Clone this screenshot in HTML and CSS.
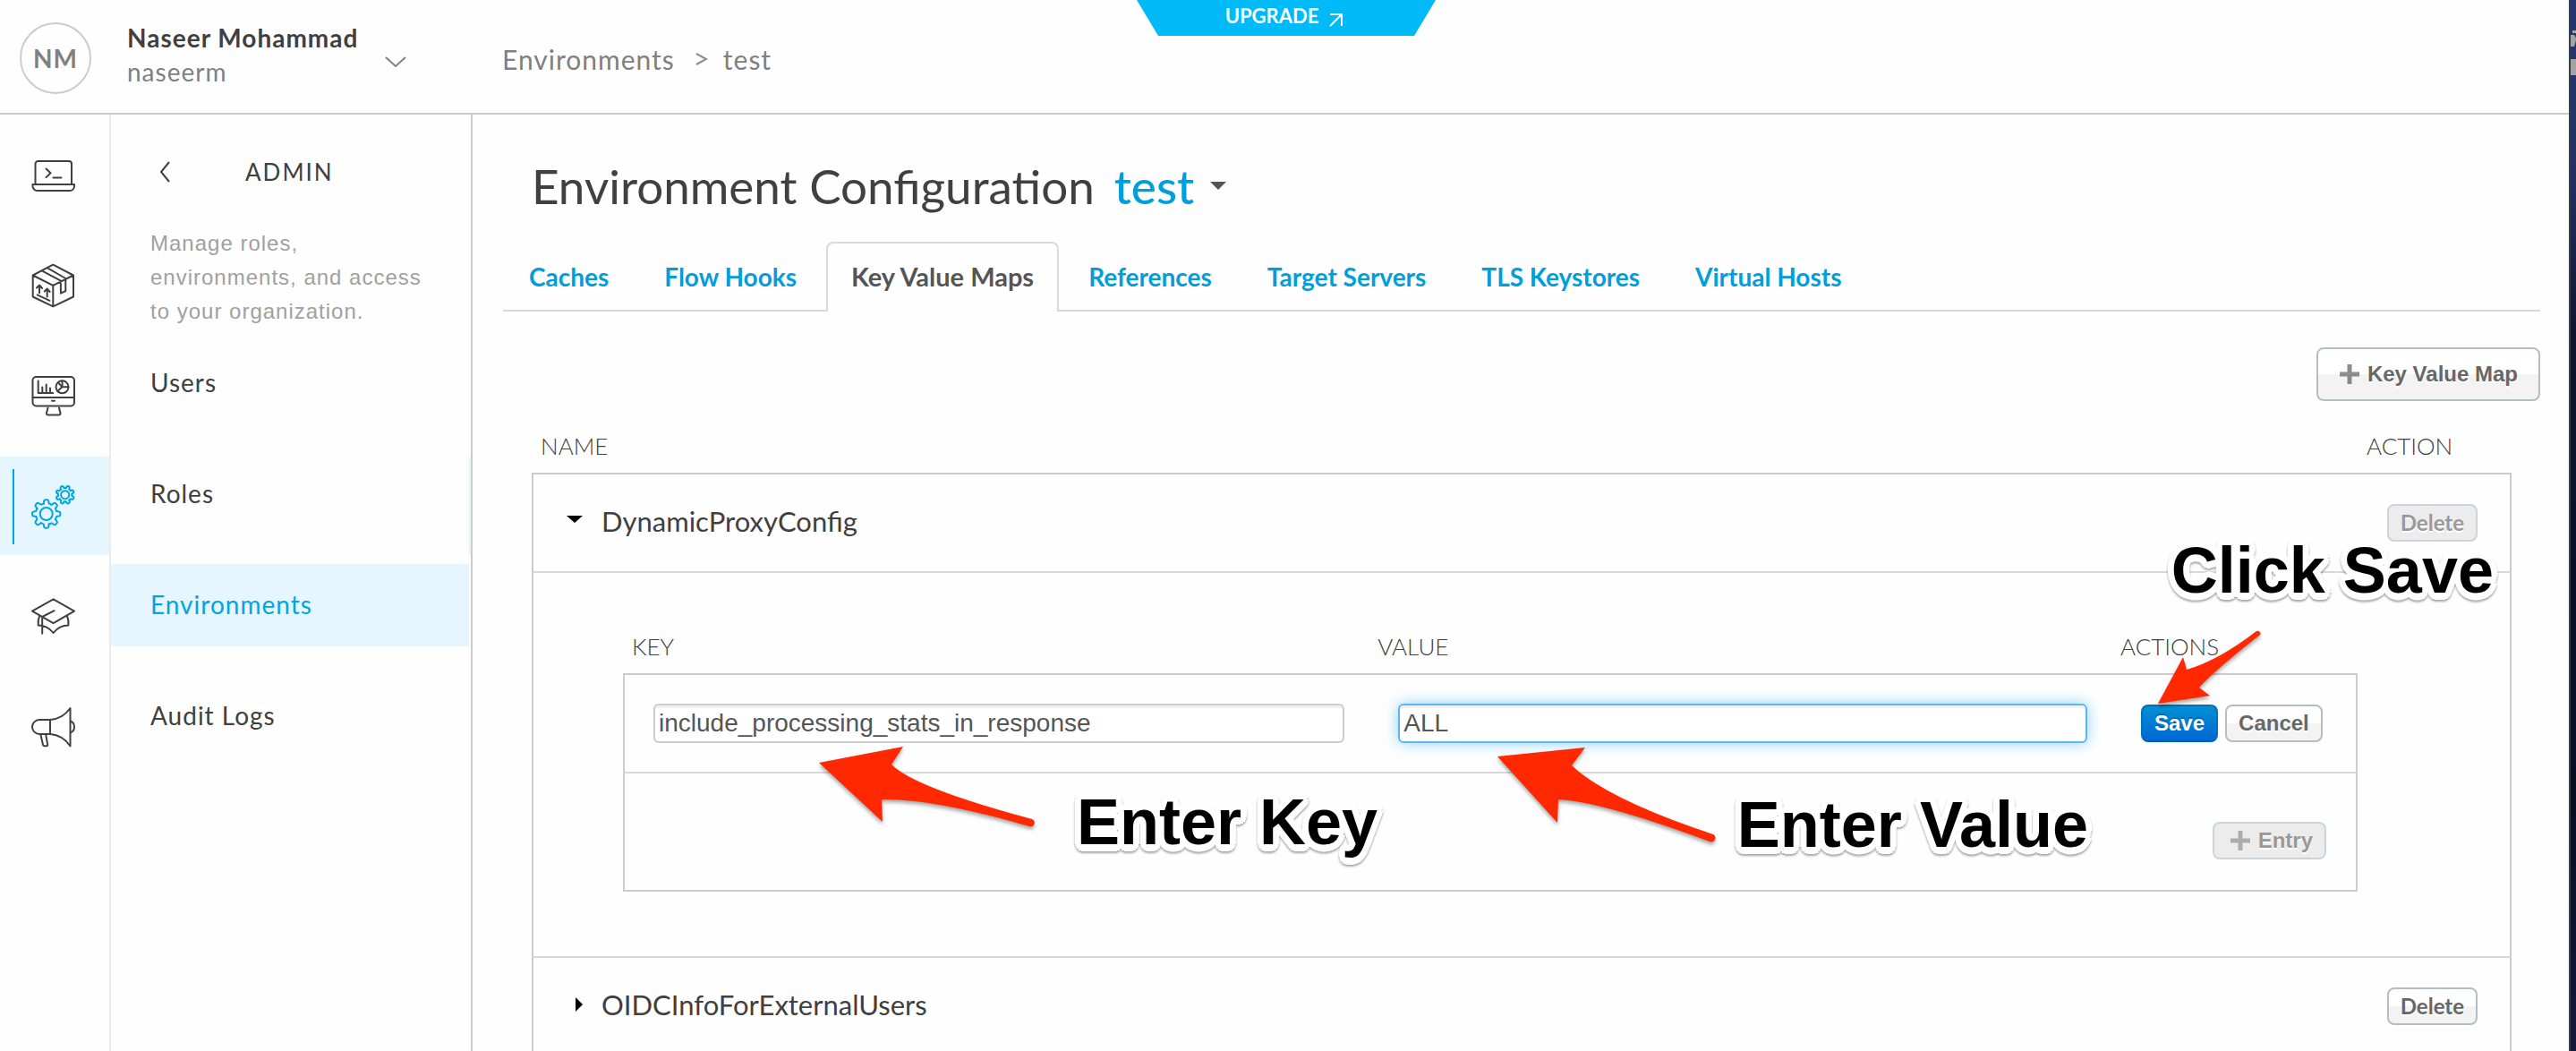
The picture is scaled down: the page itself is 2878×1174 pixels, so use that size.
FILE: index.html
```html
<!DOCTYPE html>
<html lang="en">
<head>
<meta charset="utf-8">
<meta name="viewport" content="width=device-width, initial-scale=1">
<title>Environment Configuration</title>
<link rel="stylesheet" href="styles.css">
</head>
<body>
<div class="window">
  <div class="app">
    <header class="topbar">
      <button class="account" type="button">
        <span class="avatar">NM</span>
        <span class="account-text">
          <strong class="account-name">Naseer Mohammad</strong>
          <span class="account-org">naseerm</span>
        </span>
        <svg class="account-chevron" viewBox="0 0 24 14" fill="none" stroke="#808080" stroke-width="2" aria-hidden="true"><path d="M1 2l11 10L23 2"/></svg>
      </button>
      <nav class="crumbs" aria-label="Breadcrumb">
        <a href="#environments">Environments</a>
        <svg viewBox="0 0 14 14" fill="none" stroke="#8c8c8c" stroke-width="2" aria-hidden="true"><path d="M1 1l11 6-11 6"/></svg>
        <a href="#test">test</a>
      </nav>
      <a class="upgrade" href="#upgrade">UPGRADE
        <svg viewBox="0 0 16 16" fill="none" stroke="#fff" stroke-width="2" aria-hidden="true"><path d="M1 15L14 2M1 2h13v13"/></svg>
      </a>
    </header>

    <div class="body">
      <nav class="rail" aria-label="Sections">
        <a class="rail-item" href="#develop" aria-label="Develop">
          <svg class="icon" viewBox="0 0 50 50" aria-hidden="true"><path d="M4.500 35V12a3 3 0 0 1 3-3H42a3 3 0 0 1 3 3v23M1.500 35H48v2a5 5 0 0 1-5 5H6.500a5 5 0 0 1-5-5zM16.500 17.500l5 4.800-5 4.800M24.500 27.500h9"/></svg>
        </a>
        <a class="rail-item" href="#publish" aria-label="Publish">
          <svg class="icon" viewBox="0 0 50 50" aria-hidden="true"><path d="M24.300 1.700L47 13.500v24L24.300 48.300 1.700 37.500v-24zM1.700 13.500l22.600 11.300L47 13.500M24.300 24.800v23.500M17.700 5.200L38.300 17v14l-5.400 2.600V19.700L11.700 8.300M9 33.300v-8.500M6 27.500l3-3 3 3.500M17.700 37.600v-8.800M14.700 31.500l3-3 3 3.500M6.700 35.300l13.800 6.500"/></svg>
        </a>
        <a class="rail-item" href="#analyze" aria-label="Analyze">
          <svg class="icon" viewBox="0 0 50 50" aria-hidden="true"><rect x="1.500" y="4" width="46.500" height="32.500" rx="4"/><path d="M1.500 27H48M23 30.700h3M18.500 38.500l-1.500 6q-.2 2 2 2h11.500q2.200 0 2-2l-1.500-6M7.700 8.500V22h16.500M12.300 21.500v-6M16.700 21.500v-9M21 21.500v-5"/><circle cx="34.500" cy="15.300" r="7"/><path d="M34.500 8.500v6.800h7M34.500 15.300l-5.300 4.800M34.500 15.300l-4.500-5"/></svg>
        </a>
        <a class="rail-item rail-item-active" href="#admin" aria-label="Admin">
          <svg class="icon" viewBox="0 0 50 50" aria-hidden="true">
            <defs>
              <path id="tooth" vector-effect="non-scaling-stroke" d="M-3-11.400L-2.600-14q.2-1.700 1.600-1.700h2q1.400 0 1.600 1.700l.4 2.600q1.600.2 2.900 1.300"/>
              <g id="gear"><use href="#tooth"/><use href="#tooth" transform="rotate(45)"/><use href="#tooth" transform="rotate(90)"/><use href="#tooth" transform="rotate(135)"/><use href="#tooth" transform="rotate(180)"/><use href="#tooth" transform="rotate(225)"/><use href="#tooth" transform="rotate(270)"/><use href="#tooth" transform="rotate(315)"/><circle r="7" vector-effect="non-scaling-stroke"/></g>
            </defs>
            <use href="#gear" transform="translate(16.700 34)"/>
            <use href="#gear" transform="translate(37.700 12.700) rotate(22) scale(.65)"/>
          </svg>
        </a>
        <a class="rail-item" href="#learn" aria-label="Learn">
          <svg class="icon" viewBox="0 0 50 50" aria-hidden="true"><path d="M24.600 6.300L48 19.700 24.600 33.200 1 19.700zM25.600 19.200L12.200 26v18.700M9 25.500q-1.800 4-1.300 10Q18 35.500 24.600 44q6.600-8.500 16.800-8.500.5-6-1.300-10"/></svg>
        </a>
        <a class="rail-item" href="#news" aria-label="News">
          <svg class="icon" viewBox="0 0 50 50" aria-hidden="true"><path d="M21 18H9a8 8 0 0 0 0 16h12zM21 18Q35 17 43.500 5v42.500Q35 35 21 34M43.500 19.500q4.500 1.500 4.500 6.500t-4.500 6.500M10.500 35l2.500 11q.3 1.300 1.600 1.300h2.400q1.400 0 1.200-1.500L16.300 35"/></svg>
        </a>
      </nav>

      <aside class="panel">
        <div class="panel-head">
          <button class="back" type="button" aria-label="Back"><svg viewBox="0 0 12 24" fill="none" stroke="#404040" stroke-width="2" aria-hidden="true"><path d="M11 1L2 12l9 11"/></svg></button>
          <h2 class="panel-title">ADMIN</h2>
        </div>
        <p class="panel-text">Manage roles, environments, and access to your organization.</p>
        <nav class="menu" aria-label="Admin">
          <a href="#users">Users</a>
          <a href="#roles">Roles</a>
          <a class="menu-active" href="#environments">Environments</a>
          <a href="#audit">Audit Logs</a>
        </nav>
      </aside>

      <main class="content">
        <h1 class="title">Environment Configuration
          <button class="env-picker" type="button">test<svg viewBox="0 0 18 10" aria-hidden="true"><path fill="#555" d="M0 0h18L9 9z"/></svg></button>
        </h1>

        <nav class="tabs" aria-label="Configuration">
          <a href="#caches">Caches</a>
          <a href="#hooks">Flow Hooks</a>
          <a class="tab-active" href="#kvm" aria-current="page">Key Value Maps</a>
          <a href="#references">References</a>
          <a href="#targets">Target Servers</a>
          <a href="#keystores">TLS Keystores</a>
          <a href="#hosts">Virtual Hosts</a>
        </nav>

        <div class="toolbar">
          <button class="btn btn-large" type="button"><svg class="plus" viewBox="0 0 24 24" aria-hidden="true"><path d="M12 1v22M1 12h22"/></svg>Key Value Map</button>
        </div>

        <div class="maps-wrap">
          <table class="grid maps">
            <thead>
              <tr><th scope="col">NAME</th><th class="col-action" scope="col">ACTION</th></tr>
            </thead>
            <tbody>
              <tr>
                <td><button class="toggle" type="button" aria-expanded="true"><svg viewBox="0 0 20 20" aria-hidden="true"><path d="M1 4h18l-9 8z"/></svg>DynamicProxyConfig</button></td>
                <td class="cell-action"><button class="btn btn-lato" type="button" disabled>Delete</button></td>
              </tr>
              <tr>
                <td class="cell-detail" colspan="2">
                  <table class="grid entries">
                    <thead>
                      <tr><th class="col-key" scope="col"><label for="key">KEY</label></th><th scope="col"><label for="value">VALUE</label></th><th class="col-actions" scope="col">ACTIONS</th></tr>
                    </thead>
                    <tbody>
                      <tr>
                        <td><input class="field" id="key" type="text" value="include_processing_stats_in_response"></td>
                        <td><input class="field field-focus" id="value" type="text" value="ALL"></td>
                        <td><div class="actions"><button class="btn btn-primary" type="button">Save</button><button class="btn" type="button">Cancel</button></div></td>
                      </tr>
                      <tr>
                        <td class="cell-add" colspan="3"><button class="btn btn-add" type="button" disabled><svg class="plus" viewBox="0 0 24 24" aria-hidden="true"><path d="M12 1v22M1 12h22"/></svg>Entry</button></td>
                      </tr>
                    </tbody>
                  </table>
                </td>
              </tr>
              <tr>
                <td><button class="toggle" type="button" aria-expanded="false"><svg viewBox="0 0 20 20" aria-hidden="true"><path d="M11 2v16l8-8z"/></svg>OIDCInfoForExternalUsers</button></td>
                <td class="cell-action"><button class="btn btn-lato" type="button">Delete</button></td>
              </tr>
            </tbody>
          </table>

          <svg class="arrow arrow-key" viewBox="0 0 244 96" aria-hidden="true"><path d="M3 20L97 2 84 22Q110 48 241 83a4 4 0 0 1-3 8Q130 60 73 61L74 86z"/></svg>
          <span class="note note-key">Enter Key</span>
          <svg class="arrow arrow-value" viewBox="0 0 248 112" aria-hidden="true"><path d="M3 12L101 2 86 22Q126 60 244 99a4 4 0 0 1-4 8Q118 62 71 60L70 86z"/></svg>
          <span class="note note-value">Enter Value</span>
          <svg class="arrow arrow-save" viewBox="0 0 120 86" aria-hidden="true"><path d="M3 83L31 31l4 14Q70 35 113 2a3 3 0 0 1 4 4Q66 46 49 65l12 9z"/></svg>
          <span class="note note-save">Click Save</span>
        </div>
      </main>
    </div>
  </div>

  <div class="desktop" aria-hidden="true">
    <svg viewBox="0 0 6 60" fill="#a3a3a3"><path d="M2 4h4v3H2zM0 9h4q2 2 2 6l-2 7H0zM0 36h6v18H0z"/></svg>
  </div>
</div>
</body>
</html>
```
FILE: styles.css
```css
* { box-sizing: border-box; }

body {
  margin: 0;
  background: #fff;
  color: #404040;
  font-family: Lato, "Liberation Sans", sans-serif;
  font-size: 28px;
}

a { color: inherit; text-decoration: none; }
button { font: inherit; color: inherit; cursor: pointer; }

.window { display: flex; height: 100vh; overflow: hidden; }
.app { display: flex; flex: 1; flex-direction: column; min-width: 0; background: #fefefe; }

.desktop {
  width: 8px;
  padding-top: 30px;
  border-left: 2px solid #363f44;
  background: linear-gradient(#24366f, #22315f 200px, #0c142e 380px, #060f22 900px, #111a3c);
}
.desktop svg { display: block; width: 6px; height: 60px; }

/* Top bar */
.topbar {
  position: relative;
  display: flex;
  flex: none;
  height: 128px;
  border-bottom: 2px solid #ccc;
}

.account {
  display: flex;
  align-items: center;
  width: 528px;
  padding: 4px 0 0 22px;
  border: 0;
  background: none;
  text-align: left;
  letter-spacing: 1px;
}
.avatar {
  width: 80px;
  height: 80px;
  border: 2px solid #ccc;
  border-radius: 50%;
  color: #808080;
  font-weight: 700;
  line-height: 76px;
  text-align: center;
}
.account-text { display: flex; flex-direction: column; width: 328px; padding: 0 0 8px 40px; line-height: 38px; white-space: nowrap; }
.account-name { font-weight: 700; }
.account-org { color: #808080; }
.account-chevron { width: 24px; height: 14px; margin-top: 8px; }

.crumbs {
  display: flex;
  align-items: center;
  gap: 17px;
  padding: 6px 0 0 33px;
  color: #808080;
  font-size: 30px;
  letter-spacing: 1px;
}
.crumbs svg { width: 14px; height: 14px; margin-left: 6px; }

.upgrade {
  position: absolute;
  top: 0;
  left: 50%;
  display: flex;
  justify-content: center;
  gap: 12px;
  width: 334px;
  height: 40px;
  margin-left: -165px;
  padding-right: 4px;
  background: #00baf7;
  clip-path: polygon(0 0, 100% 0, 310px 100%, 24px 100%);
  color: #fff;
  font-size: 22px;
  font-weight: 700;
  line-height: 36px;
}
.upgrade svg { width: 16px; height: 16px; margin-top: 14px; }

/* Left side */
.body { display: flex; flex: 1; min-height: 0; }

.rail {
  position: relative;
  display: flex;
  flex: none;
  flex-direction: column;
  gap: 13px;
  width: 124px;
  padding-top: 13px;
  border-right: 2px solid #ebebeb;
}
.rail-item { position: relative; display: flex; align-items: center; height: 110px; padding-left: 35px; color: #404040; }
.rail-item-active { background: #e6f6fe; color: #00a5e3; }
.rail-item-active::before { position: absolute; top: 14px; left: 14px; width: 2px; height: 84px; background: #00a5e3; content: ""; }
.rail-item-active::after { position: absolute; top: 0; left: 524px; width: 2px; height: 110px; background: #e6f6fe; content: ""; }
.icon { width: 50px; height: 50px; fill: none; stroke: currentColor; stroke-width: 2; stroke-linejoin: round; stroke-linecap: round; overflow: visible; }

.panel { flex: none; width: 404px; padding: 45px 2px 0 0; border-right: 2px solid #ccc; }
.panel-head { display: flex; align-items: center; height: 38px; padding-left: 44px; }
.back { width: 106px; padding: 0 10px; border: 0; background: none; text-align: left; }
.back svg { display: block; width: 12px; height: 24px; }
.panel-title { margin: 0; font-size: 26px; font-weight: 400; letter-spacing: 2px; }
.panel-text {
  margin: 42px 40px 15px 44px;
  color: #a0a0a0;
  font-family: "Liberation Sans", sans-serif;
  font-size: 24px;
  line-height: 38px;
  letter-spacing: 1px;
}
.menu { display: flex; flex-direction: column; gap: 32px; letter-spacing: 1px; line-height: 90px; }
.menu a { height: 92px; padding-left: 44px; }
.menu-active { background: #e6f6fe; color: #00a5e3; }

/* Content */
.content { flex: 1; min-width: 0; padding: 44px 32px 0 34px; }

.title {
  display: flex;
  gap: 22px;
  margin: 0;
  padding-left: 32px;
  font-size: 53px;
  font-weight: 400;
  line-height: 72px;
}
.env-picker { display: flex; align-items: center; gap: 18px; padding: 0; border: 0; background: none; color: #009edb; font-weight: 500; }
.env-picker svg { width: 18px; height: 10px; }

.tabs { display: flex; gap: 4px; margin-top: 26px; box-shadow: inset 0 -2px #d9d9d9; }
.tabs a {
  height: 78px;
  padding: 0 27px;
  border: 2px solid transparent;
  border-bottom: 0;
  color: #009edb;
  font-size: 28px;
  font-weight: 700;
  line-height: 74px;
}
.tabs .tab-active { padding: 0 26px; border-color: #d9d9d9; border-radius: 8px 8px 0 0; background: #fefefe; color: #555; font-size: 29px; }

.toolbar { display: flex; justify-content: flex-end; padding-top: 40px; }

.btn {
  display: inline-flex;
  align-items: center;
  justify-content: center;
  height: 42px;
  padding: 0 13px;
  border: 2px solid #b2bfc2;
  border-radius: 8px;
  background: linear-gradient(#fff 50%, #f3f3f3 50%);
  color: #676767;
  font-family: "Liberation Sans", sans-serif;
  font-size: 24px;
  font-weight: 700;
  text-shadow: 0 2px #fff;
}
.btn-large { height: 60px; padding: 0 23px; }
.btn-lato { padding: 0 13px 2px; font-family: Lato, sans-serif; }
.btn-add { padding: 0 13px 0 17px; }
.btn:disabled { border-color: #ccd4d8; background: #ececec; color: #999; }
.btn-primary {
  padding: 0 13px;
  border-color: #0072ba #0072ba #005fb0;
  background: linear-gradient(#0090d4, #0067d5);
  color: #fff;
  text-shadow: 0 -2px rgba(0, 0, 0, .2);
}
.plus { width: 24px; height: 24px; margin-right: 8px; fill: none; stroke: currentColor; stroke-width: 5; opacity: .75; }

.maps-wrap { position: relative; margin: 0 32px; }

.grid { width: 100%; border-spacing: 0; table-layout: fixed; }
.grid th {
  padding: 0 10px;
  border-bottom: 2px solid #ccc;
  font-size: 26px;
  font-weight: 300;
  text-align: left;
}
.grid td { padding: 0; border-bottom: 2px solid #d9d9d9; }
.grid td:first-child { border-left: 2px solid #ccc; }
.grid td:last-child { border-right: 2px solid #ccc; }

.maps > thead th { height: 82px; padding-top: 20px; }
.maps > tbody > tr > td { height: 110px; }
.col-action { width: 172px; }
.grid .cell-action { padding-right: 36px; text-align: right; }
.grid .cell-action .btn { vertical-align: middle; }
.grid .cell-detail { padding: 0 170px 72px 100px; }

.toggle { display: flex; align-items: center; gap: 20px; padding: 0 0 4px 36px; border: 0; background: none; font-size: 31px; }
.toggle svg { width: 20px; height: 20px; fill: #000; }

.entries th { height: 114px; padding-top: 52px; }
.entries td { height: 110px; padding: 0 27px 0 33px; }
.entries td:first-child { padding-left: 32px; }
.entries tr:last-child td { border-bottom-color: #ccc; }
.entries .cell-add { height: 132px; padding: 20px 33px 0 0; text-align: right; vertical-align: middle; }
.col-key { width: 43%; }
.col-actions { width: 275px; }
.actions { display: flex; gap: 8px; }

.field {
  display: block;
  width: 100%;
  height: 44px;
  padding: 0 4px;
  border: 2px solid #ccc;
  border-radius: 6px;
  outline: 0;
  background: #fff;
  box-shadow: inset 0 3px 1px #f1f1f1;
  color: #555;
  font-family: "Liberation Sans", sans-serif;
  font-size: 28px;
}
.field-focus { border-color: #5cb6f2; box-shadow: inset 0 3px 1px #f1f1f1, 0 0 16px rgba(60, 180, 245, .6); }

/* Callouts over the table */
.note {
  position: absolute;
  color: #000;
  font-family: "Liberation Sans", sans-serif;
  font-size: 72px;
  font-weight: 700;
  line-height: 80px;
  white-space: nowrap;
  text-shadow:
    7px 0 #fefefe, 6px 3px #fefefe, 5px 5px #fefefe, 3px 7px #fefefe,
    0 8px #fefefe, -3px 7px #fefefe, -5px 5px #fefefe, -6px 3px #fefefe,
    -7px 0 #fefefe, -6px -3px #fefefe, -5px -5px #fefefe, -3px -6px #fefefe,
    0 -7px #fefefe, 3px -6px #fefefe, 5px -5px #fefefe, 6px -3px #fefefe;
  filter: drop-shadow(0 2px 1px rgba(0, 0, 0, .35));
}
.arrow { position: absolute; fill: #ff2800; filter: drop-shadow(0 3px 2px rgba(0, 0, 0, .35)); overflow: visible; }

.arrow-key { top: 384px; left: 318px; width: 244px; height: 96px; }
.note-key { top: 430px; left: 609px; }
.arrow-value { top: 385px; right: 888px; width: 248px; height: 112px; }
.note-value { top: 433px; right: 473px; }
.arrow-save { top: 255px; right: 278px; width: 120px; height: 86px; }
.note-save { top: 149px; right: 20px; }
```
